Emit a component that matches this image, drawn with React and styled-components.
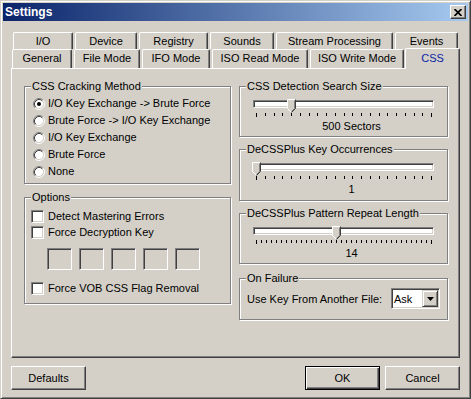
import styled, { createGlobalStyle } from "styled-components";

const FACE = "#d4d0c8";
const SHADOW = "#808080";
const DARK = "#404040";
const LIGHT = "#ffffff";

const topTabs = [
  { name: "I/O", w: 60 },
  { name: "Device", w: 62 },
  { name: "Registry", w: 69 },
  { name: "Sounds", w: 64 },
  { name: "Stream Processing", w: 117 },
  { name: "Events", w: 63 },
];

const frontTabs = [
  { name: "General", w: 60 },
  { name: "File Mode", w: 66 },
  { name: "IFO Mode", w: 68 },
  { name: "ISO Read Mode", w: 96 },
  { name: "ISO Write Mode", w: 94 },
  { name: "CSS", w: 55, active: true },
];

const methods = [
  { label: "I/O Key Exchange -> Brute Force", checked: true },
  { label: "Brute Force -> I/O Key Exchange" },
  { label: "I/O Key Exchange" },
  { label: "Brute Force" },
  { label: "None" },
];

const sliders = [
  { title: "CSS Detection Search Size", ticks: 21, value: 4, label: "500 Sectors", h: 51, gap: 0 },
  { title: "DeCSSPlus Key Occurrences", ticks: 21, value: 0, label: "1", h: 52, gap: 12 },
  { title: "DeCSSPlus Pattern Repeat Length", ticks: 36, value: 16, label: "14", h: 51, gap: 12 },
];

const GlobalStyle = createGlobalStyle`
  html, body {
    margin: 0;
    padding: 0;
    background: ${FACE};
  }
  * {
    box-sizing: border-box;
  }
  body {
    font-family: "Liberation Sans", Arial, sans-serif;
    font-size: 11px;
    color: #000;
  }
`;

// fenêtre
const Window = styled.div`
  width: 471px;
  height: 399px;
  background: ${FACE};
  border: 1px solid;
  border-color: ${FACE} ${DARK} ${DARK} ${FACE};
  box-shadow: inset 1px 1px 0 ${LIGHT}, inset -1px -1px 0 ${SHADOW};
  padding: 2px;
  display: flex;
  flex-direction: column;
`;

const TitleBar = styled.div`
  height: 18px;
  display: flex;
  align-items: center;
  justify-content: space-between;
  padding: 0 2px 0 2px;
  background: linear-gradient(to right, #0a246a, #a6caf0);
`;

const Title = styled.span`
  color: #fff;
  font-weight: bold;
  font-size: 12px;
  line-height: 14px;
`;

const CloseButton = styled.div`
  width: 16px;
  height: 14px;
  background: ${FACE};
  border: 1px solid;
  border-color: ${LIGHT} ${DARK} ${DARK} ${LIGHT};
  box-shadow: inset -1px -1px 0 ${SHADOW};
  display: flex;
  align-items: center;
  justify-content: center;
  padding-right: 1px;
`;

const Body = styled.div`
  padding: 11px 0 0 8px;
  width: 457px;
`;

// onglets
const TabRow = styled.div`
  display: flex;
  gap: 2px;
  height: ${(p) => p.$h}px;
  padding-left: ${(p) => p.$indent}px;
`;

const Tab = styled.div`
  width: ${(p) => p.$w}px;
  height: ${(p) => (p.$active ? 21 : p.$h)}px;
  margin-top: ${(p) => (p.$active ? -1 : 0)}px;
  margin-left: ${(p) => (p.$active ? -1 : 0)}px;
  position: relative;
  z-index: ${(p) => (p.$active ? 2 : 0)};
  background: ${FACE};
  border-top: 1px solid ${LIGHT};
  border-left: 1px solid ${LIGHT};
  border-right: 1px solid ${DARK};
  border-radius: 2px 2px 0 0;
  box-shadow: inset -1px 0 0 ${SHADOW};
  display: flex;
  justify-content: center;
  padding-top: ${(p) => (p.$active ? 3 : 2)}px;
  line-height: 13px;
  color: ${(p) => (p.$active ? "#0c1fa6" : "#000")};
  white-space: nowrap;
`;

const Panel = styled.div`
  width: 449px;
  height: 290px;
  border: 1px solid;
  border-color: ${LIGHT} ${DARK} ${DARK} ${LIGHT};
  box-shadow: inset -1px -1px 0 ${SHADOW};
  padding: 17px 0 0 12px;
  display: grid;
  grid-template-columns: 207px 209px;
  column-gap: 8px;
  align-items: start;
`;

const Column = styled.div`
  display: flex;
  flex-direction: column;
`;

// cadres
const Group = styled.div`
  position: relative;
  height: ${(p) => p.$h}px;
  margin-top: ${(p) => p.$gap || 0}px;
  border: 1px solid ${SHADOW};
  box-shadow: inset 1px 1px 0 ${LIGHT}, 1px 1px 0 ${LIGHT};
  padding: ${(p) => p.$pad || "0"};
`;

const Legend = styled.span`
  position: absolute;
  top: -7px;
  left: 6px;
  padding: 0 1px;
  line-height: 13px;
  background: ${FACE};
  white-space: nowrap;
`;

const OptionRow = styled.div`
  display: flex;
  align-items: center;
  height: ${(p) => p.$h}px;
  margin-top: ${(p) => p.$mt || 0}px;
  padding-left: ${(p) => p.$indent}px;
  white-space: nowrap;
`;

const OptionText = styled.span`
  margin-left: ${(p) => p.$gap}px;
  line-height: 13px;
`;

const CheckBox = styled.span`
  width: 13px;
  height: 13px;
  background: #fff;
  border: 1px solid;
  border-color: ${SHADOW} ${LIGHT} ${LIGHT} ${SHADOW};
  box-shadow: inset 1px 1px 0 ${DARK}, inset -1px -1px 0 ${FACE};
  flex: none;
`;

const KeyRow = styled.div`
  display: flex;
  gap: 7px;
  margin-top: 8px;
  padding-left: 22px;
`;

const KeyBox = styled.div`
  width: 25px;
  height: 22px;
  background: ${FACE};
  border: 1px solid;
  border-color: ${SHADOW} ${LIGHT} ${LIGHT} ${SHADOW};
  box-shadow: inset 1px 1px 0 ${DARK}, inset -1px -1px 0 ${FACE};
`;

// curseurs
const Slider = styled.div`
  position: relative;
  width: 181px;
  margin-left: 13px;
`;

const Track = styled.div`
  height: 8px;
  background: #fff;
  border: 1px solid;
  border-color: ${SHADOW} ${LIGHT} ${LIGHT} ${SHADOW};
  box-shadow: inset 1px 1px 0 ${DARK}, inset -1px -1px 0 ${FACE};
`;

const Thumb = styled.svg`
  position: absolute;
  top: -1px;
  left: ${(p) => p.$left}px;
`;

const Ticks = styled.svg`
  display: block;
  margin-top: 5px;
`;

const SliderLabel = styled.div`
  margin-top: 3px;
  padding-left: 16px;
  text-align: center;
  line-height: 13px;
`;

// combo
const FailRow = styled.div`
  display: flex;
  align-items: center;
  justify-content: space-between;
  padding: 9px 7px 0 7px;
  white-space: nowrap;
`;

const Combo = styled.div`
  width: 49px;
  height: 21px;
  background: #fff;
  border: 1px solid;
  border-color: ${SHADOW} ${LIGHT} ${LIGHT} ${SHADOW};
  box-shadow: inset 1px 1px 0 ${DARK}, inset -1px -1px 0 ${FACE};
  display: flex;
  align-items: center;
  justify-content: space-between;
  padding: 1px 1px 1px 2px;
`;

const DropButton = styled.div`
  width: 16px;
  height: 17px;
  background: ${FACE};
  border: 1px solid;
  border-color: ${FACE} ${DARK} ${DARK} ${FACE};
  box-shadow: inset 1px 1px 0 ${LIGHT}, inset -1px -1px 0 ${SHADOW};
  display: flex;
  align-items: center;
  justify-content: center;
`;

// boutons
const ButtonBar = styled.div`
  display: flex;
  align-items: center;
  width: 449px;
  margin-top: 8px;
  gap: 5px;
`;

const Spacer = styled.div`
  flex: 1;
`;

const Button = styled.div`
  width: 75px;
  height: 24px;
  display: flex;
  align-items: center;
  justify-content: center;
  background: ${FACE};
  border: 1px solid;
  border-color: ${(p) => (p.$default ? "#000" : `${LIGHT} ${DARK} ${DARK} ${LIGHT}`)};
  box-shadow: ${(p) =>
    p.$default
      ? `inset 1px 1px 0 ${LIGHT}, inset -1px -1px 0 ${DARK}, inset -2px -2px 0 ${SHADOW}`
      : `inset -1px -1px 0 ${SHADOW}`};
`;

const Radio = ({ checked }) => (
  <svg width="12" height="12" viewBox="0 0 12 12" style={{ flex: "none" }}>
    <circle cx="6" cy="6" r="4.5" fill="#fff" />
    <path d="M2.11 9.89 A5.5 5.5 0 0 1 9.89 2.11" fill="none" stroke={SHADOW} />
    <path d="M9.89 2.11 A5.5 5.5 0 0 1 2.11 9.89" fill="none" stroke={LIGHT} />
    <path d="M2.82 9.18 A4.5 4.5 0 0 1 9.18 2.82" fill="none" stroke={DARK} />
    <path d="M9.18 2.82 A4.5 4.5 0 0 1 2.82 9.18" fill="none" stroke={FACE} />
    {checked && <circle cx="6" cy="6" r="2" fill="#000" />}
  </svg>
);

const TrackBar = ({ ticks, value, label }) => {
  const xs = Array.from({ length: ticks }, (_, i) => Math.round(3 + (i * 175) / (ticks - 1)));
  return (
    <Slider>
      <Track />
      <Thumb $left={xs[value] - 4} width="9" height="14" viewBox="0 0 9 14">
        <polygon points="0.5,0.5 8.5,0.5 8.5,9.5 4.5,13.5 0.5,9.5" fill={FACE} />
        <polyline points="0.5,9.5 0.5,0.5 8.5,0.5" fill="none" stroke={LIGHT} />
        <polyline points="0.5,9.5 4.5,13.5" fill="none" stroke={LIGHT} />
        <polyline points="8.5,0.5 8.5,9.5 4.5,13.5" fill="none" stroke={DARK} />
        <polyline points="7.5,1.5 7.5,9.5 4.5,12.5" fill="none" stroke={SHADOW} />
      </Thumb>
      <Ticks width="181" height="4">
        {xs.map((x, i) => (
          <rect key={i} x={x} y="0" width="1" height={i === 0 || i === ticks - 1 ? 4 : 3} fill="#000" />
        ))}
      </Ticks>
      <SliderLabel>{label}</SliderLabel>
    </Slider>
  );
};

const App = () => {
  return (
    <>
      <GlobalStyle />
      <Window>
        <TitleBar>
          <Title>Settings</Title>
          <CloseButton>
            <svg width="8" height="7" viewBox="0 0 8 7">
              <path d="M0.5 0 L7.5 7 M7.5 0 L0.5 7" stroke="#000" strokeWidth="1.7" />
            </svg>
          </CloseButton>
        </TitleBar>
        <Body>
          <TabRow $h={17} $indent={2}>
            {topTabs.map((t) => (
              <Tab key={t.name} $w={t.w} $h={17}>{t.name}</Tab>
            ))}
          </TabRow>
          <TabRow $h={19} $indent={1}>
            {frontTabs.map((t) => (
              <Tab key={t.name} $w={t.w} $h={19} $active={t.active}>{t.name}</Tab>
            ))}
          </TabRow>
          <Panel>
            <Column>
              <Group $h={98} $pad="8px 0 0 0">
                <Legend>CSS Cracking Method</Legend>
                {methods.map((m) => (
                  <OptionRow key={m.label} $h={17} $indent={8}>
                    <Radio checked={m.checked} />
                    <OptionText $gap={3}>{m.label}</OptionText>
                  </OptionRow>
                ))}
              </Group>
              <Group $h={107} $gap={13} $pad="10px 0 0 0">
                <Legend>Options</Legend>
                <OptionRow $h={16} $indent={6}>
                  <CheckBox />
                  <OptionText $gap={4}>Detect Mastering Errors</OptionText>
                </OptionRow>
                <OptionRow $h={16} $indent={6}>
                  <CheckBox />
                  <OptionText $gap={4}>Force Decryption Key</OptionText>
                </OptionRow>
                <KeyRow>
                  {[0, 1, 2, 3, 4].map((i) => (
                    <KeyBox key={i} />
                  ))}
                </KeyRow>
                <OptionRow $h={16} $mt={10} $indent={6}>
                  <CheckBox />
                  <OptionText $gap={4}>Force VOB CSS Flag Removal</OptionText>
                </OptionRow>
              </Group>
            </Column>
            <Column>
              {sliders.map((s) => (
                <Group key={s.title} $h={s.h} $gap={s.gap} $pad="13px 0 0 0">
                  <Legend>{s.title}</Legend>
                  <TrackBar ticks={s.ticks} value={s.value} label={s.label} />
                </Group>
              ))}
              <Group $h={42} $gap={14}>
                <Legend>On Failure</Legend>
                <FailRow>
                  <span>Use Key From Another File:</span>
                  <Combo>
                    <span>Ask</span>
                    <DropButton>
                      <svg width="7" height="4" viewBox="0 0 7 4">
                        <polygon points="0,0 7,0 3.5,4" fill="#000" />
                      </svg>
                    </DropButton>
                  </Combo>
                </FailRow>
              </Group>
            </Column>
          </Panel>
          <ButtonBar>
            <Button>Defaults</Button>
            <Spacer />
            <Button $default>OK</Button>
            <Button>Cancel</Button>
          </ButtonBar>
        </Body>
      </Window>
    </>
  );
};

export default App;
